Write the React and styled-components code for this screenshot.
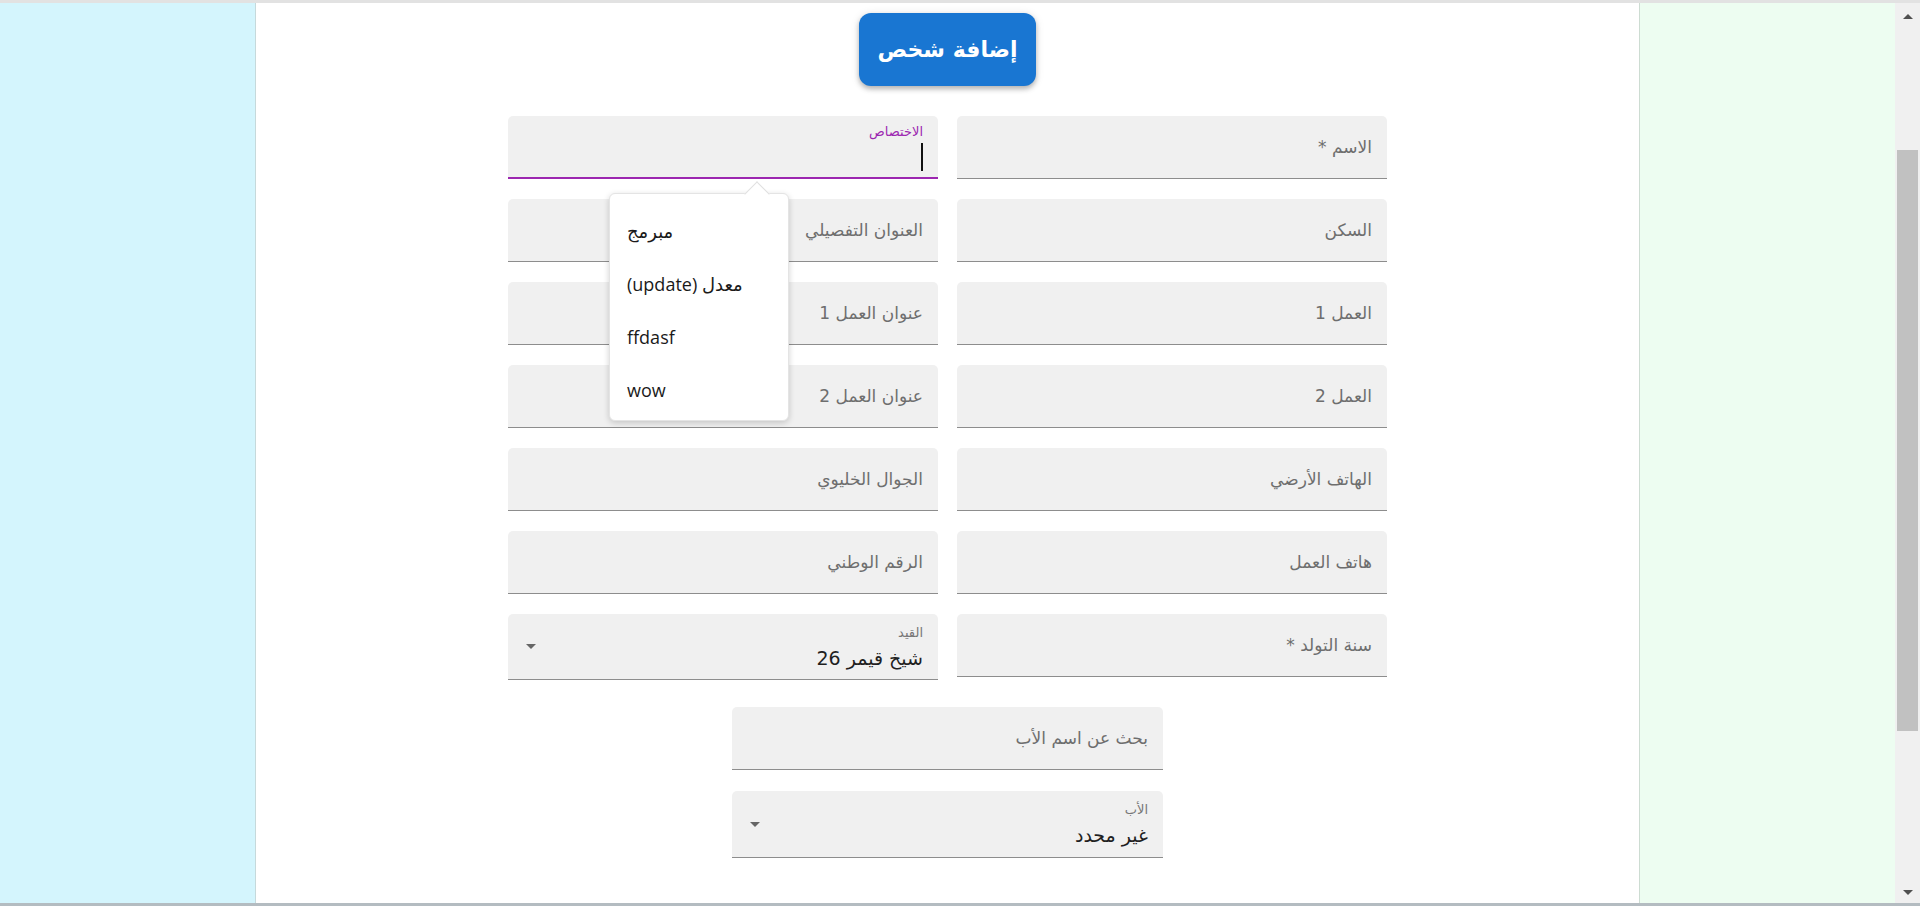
import React from 'react';
import styled, { createGlobalStyle } from 'styled-components';

const GlobalStyle = createGlobalStyle`
  html, body {
    margin: 0;
    padding: 0;
    height: 100%;
    overflow: hidden;
  }
  body {
    font-family: "DejaVu Sans", "Noto Sans", sans-serif;
  }
  * {
    box-sizing: border-box;
  }
`

const Frame = styled.div`
  height: 100vh;
  display: flex;
  flex-direction: column;
  border-top: 3px solid #e2e2e2;
  border-bottom: 3px solid #b4bcc1;
`

const Columns = styled.div`
  flex: 1;
  display: flex;
  min-height: 0;
`

const SidePanel = styled.div`
  width: 255px;
  flex-shrink: 0;
  background: ${props => props.tone};
`

const Main = styled.main`
  flex: 1;
  background: #ffffff;
  border-left: 1px solid #c6d9db;
  border-right: 1px solid #cddcd2;
  display: flex;
  flex-direction: column;
  align-items: center;
  padding-top: 10px;
`

const AddButton = styled.button`
  width: 177px;
  height: 73px;
  border: none;
  border-radius: 12px;
  background: #1976d2;
  color: #ffffff;
  font-family: "DejaVu Sans", sans-serif;
  font-weight: 700;
  font-size: 22px;
  padding-bottom: 2px;
  box-shadow: 0 3px 5px rgba(0, 0, 0, 0.25), 0 1px 10px rgba(0, 0, 0, 0.1);
  margin-bottom: 30px;
  cursor: pointer;
`

const FormGrid = styled.div`
  display: grid;
  grid-template-columns: 430px 430px;
  column-gap: 19px;
  row-gap: 20px;
  align-items: start;
`

const Field = styled.div`
  position: relative;
  height: ${props => props.h || 63}px;
  width: ${props => props.w ? `${props.w}px` : 'auto'};
  background: #f0f0f0;
  border-top-left-radius: 5px;
  border-top-right-radius: 5px;
  border-bottom: ${props => props.focused ? '2px solid #9c27b0' : '1px solid #8d8d8d'};
  padding: 0 15px 0 18px;
  display: flex;
  align-items: center;
`

const Placeholder = styled.span`
  font-size: 17px;
  color: #6e6e6e;
  white-space: nowrap;
`

const Stack = styled.div`
  display: flex;
  flex-direction: column;
  gap: ${props => props.gap || 4}px;
  padding-top: ${props => props.pt || 2}px;
`

const SmallLabel = styled.span`
  font-size: 13px;
  line-height: 16px;
  color: ${props => props.color || '#777777'};
`

const Value = styled.span`
  font-size: 19px;
  line-height: 26px;
  color: #1f1f1f;
`

const Caret = styled.div`
  width: 2px;
  height: 28px;
  background: #111111;
`

const SelectArrow = styled.div`
  margin-right: auto;
  width: 0;
  height: 0;
  border-left: 5px solid transparent;
  border-right: 5px solid transparent;
  border-top: 5px solid #666666;
`

const Menu = styled.div`
  position: absolute;
  left: 101px;
  top: 77px;
  width: 180px;
  height: 228px;
  background: #ffffff;
  border-radius: 6px;
  border: 1px solid #e4e4e4;
  box-shadow: 0 2px 6px rgba(0, 0, 0, 0.18);
  padding-top: 10px;
  direction: ltr;
  z-index: 5;
  &::before {
    content: "";
    position: absolute;
    left: 138px;
    top: -9px;
    width: 17px;
    height: 17px;
    background: #ffffff;
    border-left: 1px solid #e0e0e0;
    border-top: 1px solid #e0e0e0;
    transform: rotate(45deg);
  }
`

const MenuItem = styled.div`
  height: 53px;
  display: flex;
  align-items: center;
  padding-left: 17px;
  font-family: "Open Sans", "DejaVu Sans", sans-serif;
  font-size: 18px;
  color: #1a1a1a;
  position: relative;
`

const CenterBlock = styled.div`
  display: flex;
  flex-direction: column;
  gap: 21px;
  margin-top: 27px;
`

const Scrollbar = styled.div`
  width: 25px;
  flex-shrink: 0;
  background: #f0f0f0;
  display: flex;
  flex-direction: column;
`

const ScrollArrow = styled.div`
  height: ${props => props.h}px;
  display: flex;
  align-items: center;
  justify-content: center;
  padding-left: 1px;
  &::after {
    content: "";
    border-left: 5.5px solid transparent;
    border-right: 5.5px solid transparent;
    ${props => props.up ? 'border-bottom: 5px solid #505050;' : 'border-top: 5px solid #505050;'}
  }
`

const Track = styled.div`
  flex: 1;
  padding: 121px 2px 0 2px;
`

const Thumb = styled.div`
  height: 581px;
  background: #c1c1c1;
`

const TextField = ({ label }) => (
  <Field>
    <Placeholder>{label}</Placeholder>
  </Field>
)

const SelectField = ({ label, value, w, h }) => (
  <Field h={h || 66} w={w}>
    <Stack>
      <SmallLabel>{label}</SmallLabel>
      <Value>{value}</Value>
    </Stack>
    <SelectArrow />
  </Field>
)

const options = ['مبرمج', 'معدل (update)', 'ffdasf', 'wow']

const App = () => {
  return (
    <>
      <GlobalStyle />
      <Frame>
        <Columns>
          <SidePanel tone="#d4f5fd" />
          <Main>
            <AddButton>إضافة شخص</AddButton>
            <FormGrid dir="rtl">
              <TextField label="الاسم *" />
              <Field focused>
                <Stack gap={3} pt={0}>
                  <SmallLabel color="#9c27b0">الاختصاص</SmallLabel>
                  <Caret />
                </Stack>
                <Menu>
                  {options.map(o => (
                    <MenuItem key={o}><span dir="rtl">{o}</span></MenuItem>
                  ))}
                </Menu>
              </Field>
              <TextField label="السكن" />
              <TextField label="العنوان التفصيلي" />
              <TextField label="العمل 1" />
              <TextField label="عنوان العمل 1" />
              <TextField label="العمل 2" />
              <TextField label="عنوان العمل 2" />
              <TextField label="الهاتف الأرضي" />
              <TextField label="الجوال الخليوي" />
              <TextField label="هاتف العمل" />
              <TextField label="الرقم الوطني" />
              <TextField label="سنة التولد *" />
              <SelectField label="القيد" value="شيخ قيمر 26" />
            </FormGrid>
            <CenterBlock dir="rtl">
              <Field w={431}>
                <Placeholder>بحث عن اسم الأب</Placeholder>
              </Field>
              <SelectField label="الأب" value="غير محدد" w={431} h={67} />
            </CenterBlock>
          </Main>
          <SidePanel tone="#edfdf1" />
          <Scrollbar>
            <ScrollArrow up h={26} />
            <Track>
              <Thumb />
            </Track>
            <ScrollArrow h={22} />
          </Scrollbar>
        </Columns>
      </Frame>
    </>
  );
}

export default App;
